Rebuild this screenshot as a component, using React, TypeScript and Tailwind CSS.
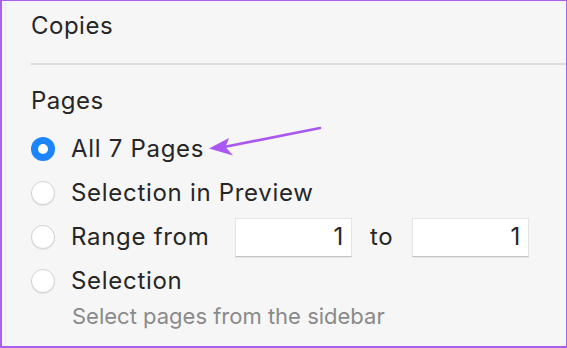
const font = { fontFamily: 'Inter, "Noto Sans", sans-serif' }

const Radio = ({ checked }: { checked?: boolean }) =>
  checked ? (
    <span className="flex h-6 w-6 shrink-0 items-center justify-center rounded-full bg-[#1c84fc]">
      <span className="h-[10px] w-[10px] rounded-full bg-white" />
    </span>
  ) : (
    <span className="h-6 w-6 shrink-0 rounded-full border border-[#d2d2d2] bg-white shadow-[0_1px_1px_rgba(0,0,0,0.08)]" />
  )

const NumberBox = ({ value }: { value: string }) => (
  <div className="flex h-[39px] w-[117px] shrink-0 items-center justify-end border border-[#e4e4e4] border-b-[#c4c4c4] bg-white pr-[7px] shadow-[0_1px_0_rgba(0,0,0,0.06)]">
    {value}
  </div>
)

export default function App() {
  return (
    <div
      className="relative h-[348px] w-[567px] overflow-hidden border-t border-r border-b-2 border-l-2 border-[#ab5ef2] bg-[#f6f6f6] text-[#262626]"
      style={font}
    >
      <div className="ml-[3px] h-full border-l border-dotted border-[#e2e2e2] pl-[25px]">
        <div className="pt-[11px] text-[24px] leading-[28px] tracking-[0.5px]">Copies</div>
        <div className="mt-[23px] h-[2px] bg-[#dcdcdc]" />
        <div className="mt-[22px] text-[24px] leading-[28px] tracking-[0.5px]">Pages</div>

        <div className="mt-[12px] flex flex-col text-[24px] leading-[28px] tracking-[0.7px]">
          <div className="flex h-[44px] items-center gap-4">
            <Radio checked />
            <span>All 7 Pages</span>
          </div>
          <div className="flex h-[44px] items-center gap-4">
            <Radio />
            <span>Selection in Preview</span>
          </div>
          <div className="flex h-[44px] items-center gap-4">
            <Radio />
            <span className="w-[148px] shrink-0">Range from</span>
            <NumberBox value="1" />
            <span className="-ml-4 w-[60px] shrink-0 pl-[18px]">to</span>
            <div className="-ml-4">
              <NumberBox value="1" />
            </div>
          </div>
          <div className="flex h-[44px] items-center gap-4">
            <Radio />
            <span>Selection</span>
          </div>
          <div className="pl-[41px] text-[22px] leading-[26px] tracking-normal text-[#8a8a8a]">
            Select pages from the sidebar
          </div>
        </div>
      </div>

      <svg className="absolute left-0 top-0" width="567" height="348" viewBox="0 0 567 348">
        <line x1="318" y1="127" x2="222" y2="146" stroke="#a958f0" strokeWidth="2.6" strokeLinecap="round" />
        <path d="M207 147.5 L227 137 L223.5 146 L231 154.5 Z" fill="#a958f0" strokeLinejoin="round" />
      </svg>
    </div>
  )
}
